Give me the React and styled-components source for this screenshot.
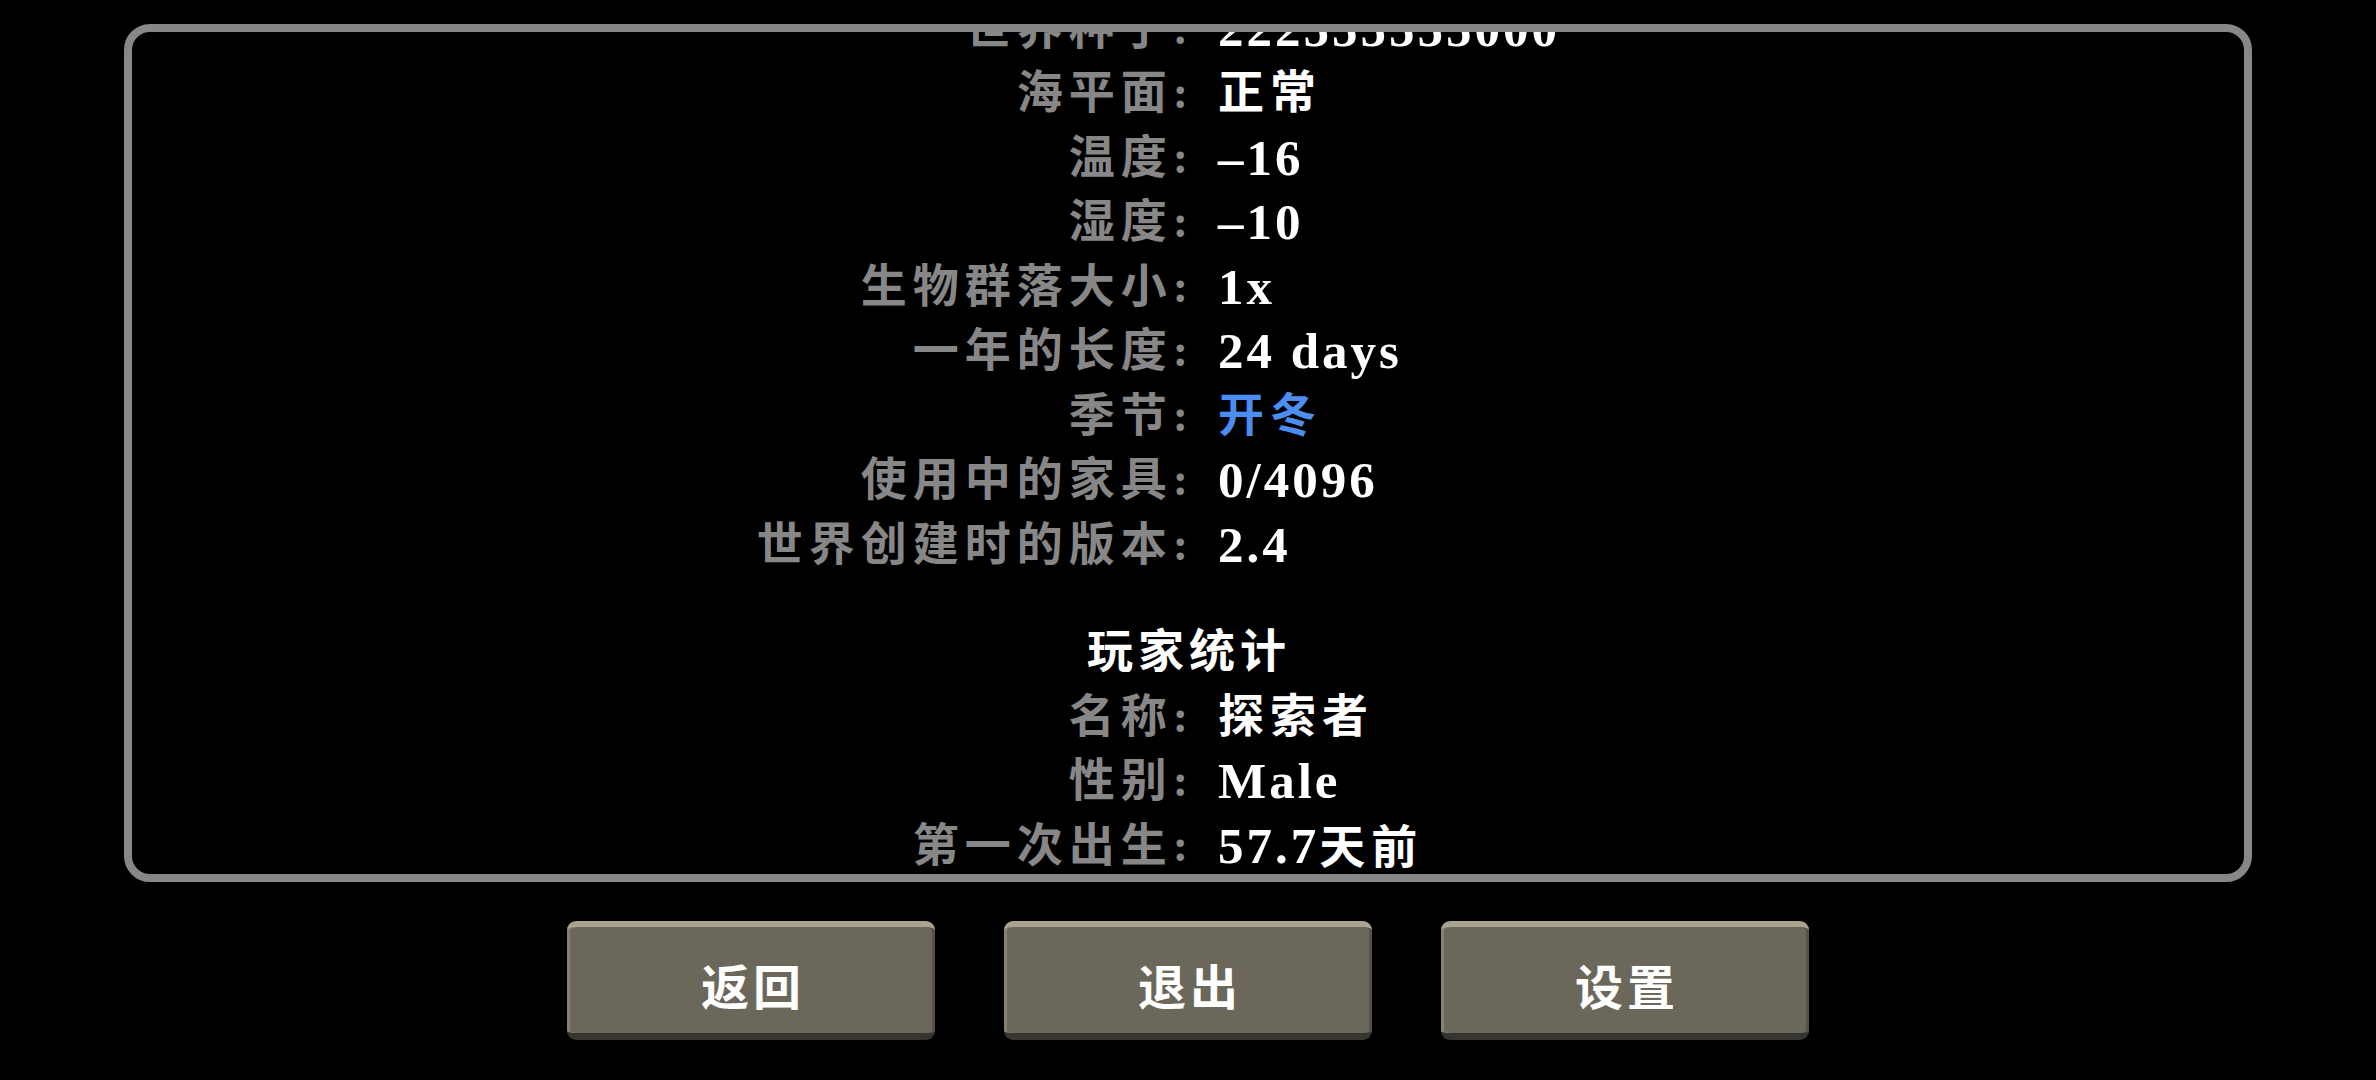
import styled, { createGlobalStyle } from 'styled-components';

const GlobalStyle = createGlobalStyle`
  html, body {
    margin: 0;
    padding: 0;
    background: #000;
  }
  body {
    width: 2376px;
    height: 1080px;
    overflow: hidden;
    font-family: "Liberation Serif", "Noto Sans CJK SC", serif;
  }
`;

const Screen = styled.div`
  width: 2376px;
  height: 1080px;
  background: #000;
  display: flex;
  flex-direction: column;
  align-items: center;
  padding-top: 24px;
  box-sizing: border-box;
`;

const Panel = styled.div`
  width: 2128px;
  height: 858px;
  box-sizing: border-box;
  border: 8px solid #878787;
  border-radius: 26px;
  overflow: hidden;
`;

/* list is scrolled a bit: the seed row sits under the top border */
const StatList = styled.div`
  margin-top: -35.5px;
  display: flex;
  flex-direction: column;
`;

const Row = styled.div`
  display: grid;
  grid-template-columns: 1fr 1fr;
  height: 64.5px;
  line-height: 64.5px;
  font-size: 46px;
  font-weight: 700;
  letter-spacing: 6px;
  white-space: nowrap;
`;

const Label = styled.span`
  color: #878787;
  text-align: right;
  margin-right: -6px;
`;

const Value = styled.span`
  color: ${(p) => p.color || '#fff'};
  padding-left: 30px;
`;

// latin runs in the game font are a little taller and tighter than the CJK ones
const Latin = styled.span`
  font-size: 51px;
  letter-spacing: 3px;
`;

const Heading = styled.div`
  margin-top: 43px;
  height: 64.5px;
  line-height: 64.5px;
  text-align: center;
  color: #fff;
  font-size: 46px;
  font-weight: 700;
  letter-spacing: 5px;
  padding-left: 2px;
`;

const ButtonBar = styled.div`
  margin-top: 39px;
  display: flex;
  gap: 69px;
`;

const MenuButton = styled.button`
  width: 368px;
  height: 119px;
  box-sizing: border-box;
  background: #6b675b;
  border: none;
  border-top: 6px solid #a9a390;
  border-bottom: 7px solid #37352f;
  border-radius: 9px;
  box-shadow: inset 3px 0 0 #87826f, inset -3px 0 0 #55524a;
  color: #fff;
  font-family: "Noto Sans CJK SC", sans-serif;
  font-size: 48px;
  font-weight: 700;
  letter-spacing: 4px;
  padding: 8px 0 0 4px;
  cursor: pointer;
`;

const worldStats = [
  ['世界种子', '222555555000'],
  ['海平面', '正常'],
  ['温度', '–16'],
  ['湿度', '–10'],
  ['生物群落大小', '1x'],
  ['一年的长度', '24 days'],
  ['季节', '开冬', '#4c8ef0'],
  ['使用中的家具', '0/4096'],
  ['世界创建时的版本', '2.4'],
];

const playerStats = [
  ['名称', '探索者'],
  ['性别', 'Male'],
  ['第一次出生', '57.7天前'],
];

const splitRuns = (text) =>
  text.split(/([\u4e00-\u9fff]+)/).filter(Boolean).map((part, i) =>
    /[\u4e00-\u9fff]/.test(part) ? part : <Latin key={i}>{part}</Latin>
  );

const StatRow = ({ label, value, color }) => (
  <Row>
    <Label>{label}:</Label>
    <Value color={color}>{splitRuns(value)}</Value>
  </Row>
);

const App = () => {
  return (
    <>
      <GlobalStyle />
      <Screen>
        <Panel>
          <StatList>
            {worldStats.map(([l, v, c]) => (
              <StatRow key={l} label={l} value={v} color={c} />
            ))}
            <Heading>玩家统计</Heading>
            {playerStats.map(([l, v]) => (
              <StatRow key={l} label={l} value={v} />
            ))}
          </StatList>
        </Panel>
        <ButtonBar>
          <MenuButton>返回</MenuButton>
          <MenuButton>退出</MenuButton>
          <MenuButton>设置</MenuButton>
        </ButtonBar>
      </Screen>
    </>
  );
};

export default App;
